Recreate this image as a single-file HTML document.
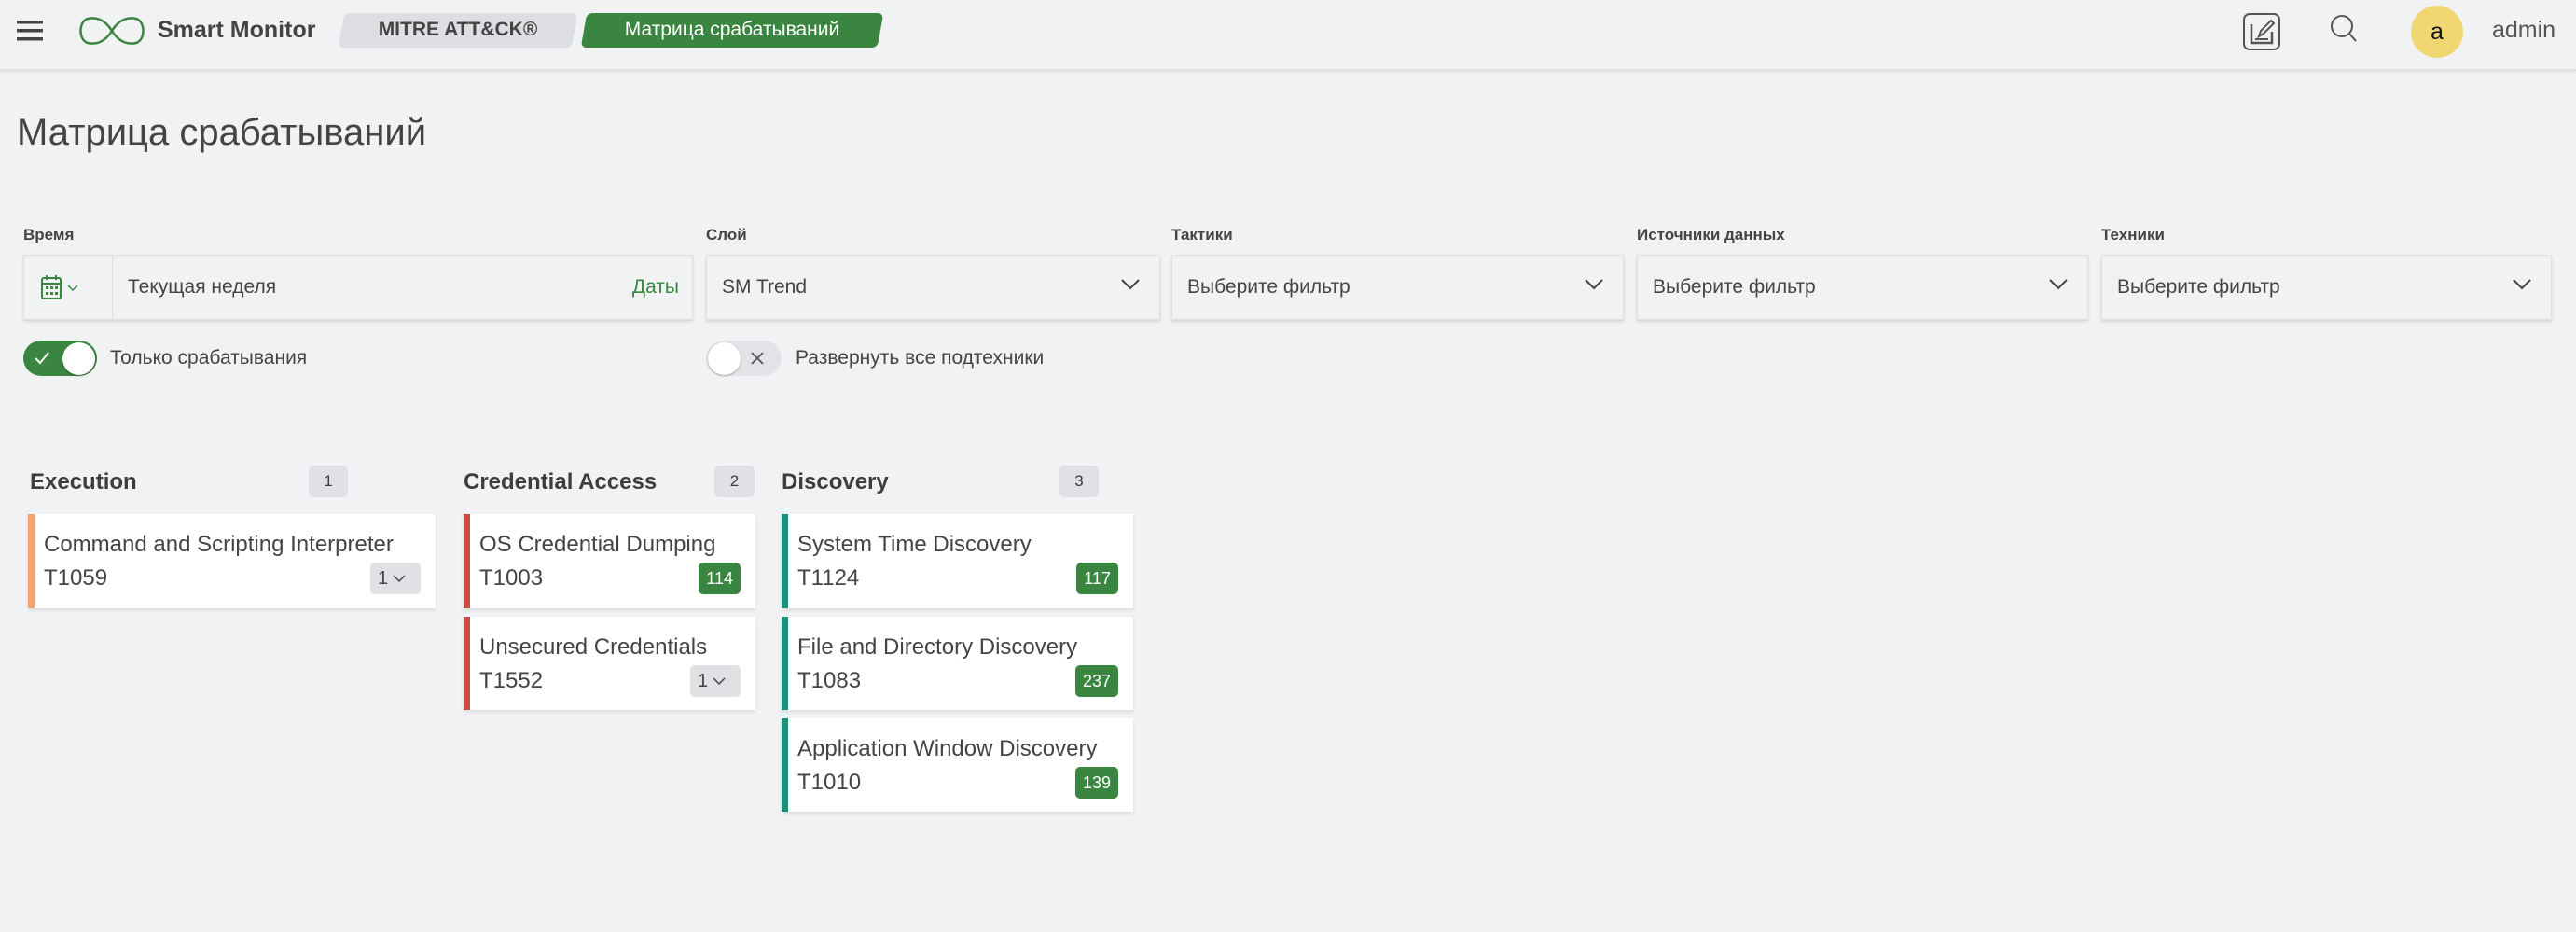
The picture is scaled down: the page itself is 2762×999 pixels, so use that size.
<!DOCTYPE html>
<html><head><meta charset="utf-8"><style>
*{box-sizing:border-box;margin:0;padding:0}
body{width:2762px;height:999px;background:#f1f2f4;font-family:"Liberation Sans",sans-serif;color:#3d3d3d;position:relative;overflow:hidden}
.abs{position:absolute}
.hdr{left:0;top:0;width:2762px;height:76px;background:#f1f2f4;border-bottom:2px solid #dfe0e3;box-shadow:0 2px 3px rgba(0,0,0,.06)}
.lbl{font-size:17px;font-weight:bold;color:#444;top:242px}
.inp{top:273px;height:70px;background:#f1f2f4;border:1px solid #e0e1e4;box-shadow:0 2px 3px rgba(0,0,0,.12);font-size:21px;display:flex;align-items:center;padding-left:16px;color:#444}
.chev{position:absolute;right:20px;top:24px}
.col{font-size:24px;font-weight:bold;top:503px}
.cnt{height:34px;background:#dfe1e5;border-radius:5px;font-size:17px;display:flex;align-items:center;justify-content:center;top:499px}
.card{background:#fff;box-shadow:0 2px 4px rgba(0,0,0,.1);border-left:7px solid;padding-left:10px;font-size:24px;color:#444}
.card .t{position:absolute;top:19px;white-space:nowrap}
.card .c{position:absolute;top:55px}
.g{position:absolute;right:16px;top:52px;height:34px;background:#3a8540;color:#fff;border-radius:5px;font-size:18px;padding:0 8px;display:flex;align-items:center}
.d{position:absolute;right:16px;top:52px;height:34px;width:54px;background:#dfe1e5;border-radius:5px;font-size:20px;display:flex;align-items:center;padding-left:8px}
</style></head><body>
<div class="abs hdr"></div>
<svg class="abs" style="left:18px;top:22px" width="28" height="22"><rect y="0" width="28" height="3.5" fill="#444"/><rect y="9" width="28" height="3.5" fill="#444"/><rect y="18" width="28" height="3.5" fill="#444"/></svg>
<svg class="abs" style="left:82px;top:14px" width="76" height="38" viewBox="0 0 76 38"><path d="M38 19 C30 6 20 4 12 6 C2 9 2 29 12 32 C20 34 30 32 38 19 C46 6 56 4 64 6 C74 9 74 29 64 32 C56 34 46 32 38 19" fill="none" stroke="#3a8540" stroke-width="2.5"/></svg>
<div class="abs" style="left:169px;top:18px;font-size:25px;font-weight:bold;color:#444">Smart Monitor</div>
<div class="abs" style="left:366px;top:14px;width:250px;height:37px;background:#dcdee2;transform:skewX(-10deg);border-radius:6px"></div>
<div class="abs" style="left:366px;top:20px;width:250px;text-align:center;font-size:21px;font-weight:bold;color:#444">MITRE ATT&amp;CK®</div>
<div class="abs" style="left:626px;top:14px;width:318px;height:37px;background:#3a8540;transform:skewX(-10deg);border-radius:6px"></div>
<div class="abs" style="left:626px;top:20px;width:318px;text-align:center;font-size:21px;color:#fff">Матрица срабатываний</div>
<svg class="abs" style="left:2405px;top:14px" width="40" height="40" viewBox="0 0 40 40"><rect x="1" y="1" width="38" height="38" rx="6" fill="none" stroke="#555" stroke-width="2"/><path d="M9 12 V32 H31 V20" fill="none" stroke="#555" stroke-width="2.5"/><path d="M17 25 L19 19 L30 8 L33 11 L22 22 Z" fill="none" stroke="#555" stroke-width="2"/><path d="M13 28 H27" stroke="#555" stroke-width="2"/></svg>
<svg class="abs" style="left:2497px;top:14px" width="34" height="34" viewBox="0 0 34 34"><circle cx="14" cy="14" r="11" fill="none" stroke="#555" stroke-width="2"/><path d="M22 22 L29 30" stroke="#555" stroke-width="2"/></svg>
<div class="abs" style="left:2585px;top:6px;width:56px;height:56px;border-radius:50%;background:#f0d772;text-align:center;line-height:56px;font-size:25px;color:#111">a</div>
<div class="abs" style="left:2672px;top:18px;font-size:25px;color:#555">admin</div>

<div class="abs" style="left:18px;top:120px;font-size:40px;color:#444">Матрица срабатываний</div>

<div class="abs lbl" style="left:25px">Время</div>
<div class="abs lbl" style="left:757px">Слой</div>
<div class="abs lbl" style="left:1256px">Тактики</div>
<div class="abs lbl" style="left:1755px">Источники данных</div>
<div class="abs lbl" style="left:2253px">Техники</div>

<div class="abs inp" style="left:25px;width:718px;padding-left:0">
<div style="width:95px;height:100%;border-right:1px solid #e0e1e4;display:flex;align-items:center;padding-left:17px">
<svg width="46" height="28" viewBox="0 0 46 28"><rect x="2" y="4" width="20" height="22" rx="2" fill="none" stroke="#3a8540" stroke-width="2"/><path d="M2 10H22M7 1V6M17 1V6" stroke="#3a8540" stroke-width="2"/><g fill="#3a8540"><rect x="6" y="13" width="3" height="3"/><rect x="11" y="13" width="3" height="3"/><rect x="16" y="13" width="3" height="3"/><rect x="6" y="19" width="3" height="3"/><rect x="11" y="19" width="3" height="3"/><rect x="16" y="19" width="3" height="3"/></g><path d="M30 12 L35 17 L40 12" fill="none" stroke="#3a8540" stroke-width="1.5"/></svg></div>
<div style="padding-left:16px;flex:1">Текущая неделя</div>
<div style="color:#3a8540;padding-right:14px">Даты</div></div>
<div class="abs inp" style="left:757px;width:487px">SM Trend<svg class="chev" width="22" height="14"><path d="M2 2 L11 11 L20 2" fill="none" stroke="#444" stroke-width="2"/></svg></div>
<div class="abs inp" style="left:1256px;width:485px">Выберите фильтр<svg class="chev" width="22" height="14"><path d="M2 2 L11 11 L20 2" fill="none" stroke="#444" stroke-width="2"/></svg></div>
<div class="abs inp" style="left:1755px;width:484px">Выберите фильтр<svg class="chev" width="22" height="14"><path d="M2 2 L11 11 L20 2" fill="none" stroke="#444" stroke-width="2"/></svg></div>
<div class="abs inp" style="left:2253px;width:483px">Выберите фильтр<svg class="chev" width="22" height="14"><path d="M2 2 L11 11 L20 2" fill="none" stroke="#444" stroke-width="2"/></svg></div>

<div class="abs" style="left:25px;top:365px;width:79px;height:38px;border-radius:19px;background:#3a8540"></div>
<svg class="abs" style="left:36px;top:376px" width="18" height="16"><path d="M2 8 L7 13 L16 2" fill="none" stroke="#fff" stroke-width="2"/></svg>
<div class="abs" style="left:67px;top:367px;width:35px;height:35px;border-radius:50%;background:#fff;box-shadow:0 1px 2px rgba(0,0,0,.3)"></div>
<div class="abs" style="left:118px;top:372px;font-size:21px;color:#444">Только срабатывания</div>
<div class="abs" style="left:757px;top:365px;width:81px;height:38px;border-radius:19px;background:#e2e3e6"></div>
<div class="abs" style="left:759px;top:367px;width:35px;height:35px;border-radius:50%;background:#fff;box-shadow:0 1px 2px rgba(0,0,0,.3)"></div>
<svg class="abs" style="left:804px;top:376px" width="16" height="16"><path d="M2 2 L14 14 M14 2 L2 14" stroke="#555" stroke-width="1.8"/></svg>
<div class="abs" style="left:853px;top:372px;font-size:21px;color:#444">Развернуть все подтехники</div>

<div class="abs col" style="left:32px">Execution</div>
<div class="abs cnt" style="left:331px;width:42px">1</div>
<div class="abs col" style="left:497px">Credential Access</div>
<div class="abs cnt" style="left:766px;width:43px">2</div>
<div class="abs col" style="left:838px">Discovery</div>
<div class="abs cnt" style="left:1136px;width:42px">3</div>

<div class="abs card" style="left:30px;top:551px;width:437px;height:101px;border-color:#f0a46c"><div class="t">Command and Scripting Interpreter</div><div class="c">T1059</div><div class="d">1 <svg width="16" height="10" style="margin-left:4px"><path d="M2 2 L8 8 L14 2" fill="none" stroke="#444" stroke-width="1.5"/></svg></div></div>
<div class="abs card" style="left:497px;top:551px;width:313px;height:101px;border-color:#c9503f"><div class="t">OS Credential Dumping</div><div class="c">T1003</div><div class="g">114</div></div>
<div class="abs card" style="left:497px;top:661px;width:313px;height:100px;border-color:#c9503f"><div class="t">Unsecured Credentials</div><div class="c">T1552</div><div class="d">1 <svg width="16" height="10" style="margin-left:4px"><path d="M2 2 L8 8 L14 2" fill="none" stroke="#444" stroke-width="1.5"/></svg></div></div>
<div class="abs card" style="left:838px;top:551px;width:377px;height:101px;border-color:#1f8f7a"><div class="t">System Time Discovery</div><div class="c">T1124</div><div class="g">117</div></div>
<div class="abs card" style="left:838px;top:661px;width:377px;height:100px;border-color:#1f8f7a"><div class="t">File and Directory Discovery</div><div class="c">T1083</div><div class="g">237</div></div>
<div class="abs card" style="left:838px;top:770px;width:377px;height:100px;border-color:#1f8f7a"><div class="t">Application Window Discovery</div><div class="c">T1010</div><div class="g">139</div></div>
</body></html>
